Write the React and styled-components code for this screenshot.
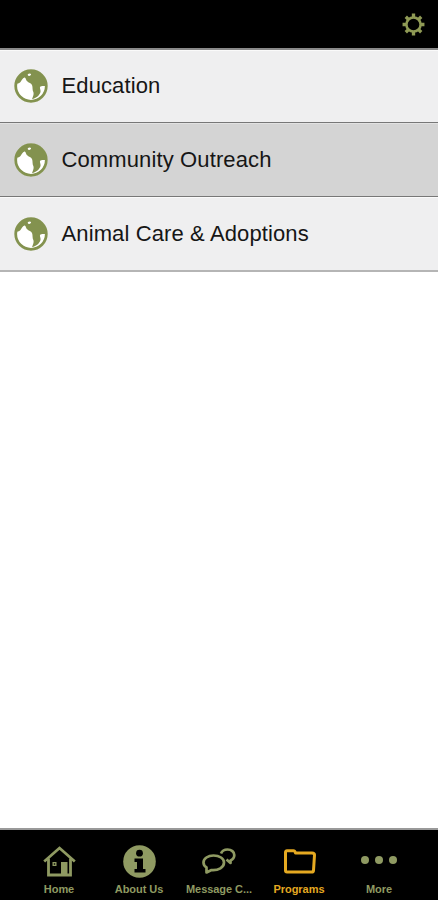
import React from 'react';
import styled, { createGlobalStyle } from 'styled-components';

const Global = createGlobalStyle`
  html, body { margin: 0; padding: 0; background: #fff; }
  #root { height: 900px; }
  * { box-sizing: border-box; }
`;
const Page = styled.div`
  width: 438px; height: 900px; display: flex; flex-direction: column;
  font-family: "Liberation Sans", Arial, sans-serif; background: #fff; overflow: hidden;
`;
const TopBar = styled.header`
  height: 50px; flex: none; background: #000; border-bottom: 2px solid #8a8a8a;
  display: flex; align-items: flex-start; justify-content: flex-end; padding: 12px 12px 0 0;
`;
const List = styled.div`flex: 1; display: flex; flex-direction: column;`;
const Row = styled.div`
  height: 74px; display: flex; align-items: center; gap: 14px; padding-left: 14px;
  background: ${p => p.$active ? '#d4d4d4' : '#efeff0'};
  border-bottom: 1px solid #777;
  box-shadow: inset 0 1px 0 ${p => p.$active ? '#e2e2e2' : '#fafafa'};
  &:first-child { height: 73px; }
  &:last-child { border-bottom: 2px solid #b5b5b5; height: 75px; }
`;
const Label = styled.span`font-size: 22px; color: #161616; letter-spacing: 0.12px; margin-left: -0.5px;`;
const TabBar = styled.nav`
  height: 72px; flex: none; background: #000; border-top: 2px solid #999;
  display: grid; grid-template-columns: repeat(5, 80px); padding-left: 19px;
`;
const Tab = styled.div`
  display: flex; flex-direction: column; align-items: center;
  padding-top: 14px; color: ${p => p.$active ? '#e5a921' : '#8f9a62'};
`;
const IconSlot = styled.div`height: 34px; display: flex; align-items: center; justify-content: center;`;
const TabLabel = styled.span`
  font-size: 11px; font-weight: 700; line-height: 12px; margin-top: 5px; white-space: nowrap; letter-spacing: -0.05px;
`;
const DotsIcon = styled.svg`margin-top: -2px;`;

const Globe = () => (
  <svg width="34" height="34" viewBox="0 0 34 34">
    <circle cx="17" cy="17" r="16.500" fill="#fff" />
    <path fill="#83924f" d="M1.500 15 C3 14.500 5 14.500 6.500 13 C7.500 11.500 8.500 9 10.500 8.500 C12 8.500 11.500 11 13.500 12.500 C15 14 17 14 18 16 C19 18 18 21 19.500 23.500 C20 25.500 19 27.500 18 30 C22.500 29.500 25.500 26 26.500 23 C27 20.500 25 18.500 26.500 17.500 C28 16.800 30.500 17 32.500 17 C32.500 8 25.500 1.500 17 1.500 C9 1.500 2.500 7.500 1.500 15z" />
    <path fill="#fff" d="M14 5c1-.8 2.500-.8 3 0 .3 1-.7 1.800-1.800 2-1 .2-2-1.200-1.200-2z" />
    <path fill="#fff" d="M29.500 19.500c.8-.2 1.300 .2 1.200 1-.5 2-1.500 3.800-3 5.500-.5 .4-1.100 0-.9-.6 .8-2 1.300-4.800 2.700-5.900z" />
    <circle cx="17" cy="17" r="15.300" fill="none" stroke="#83924f" strokeWidth="2.800" />
  </svg>
);
const Gear = () => (
  <svg width="25" height="25" viewBox="0 0 24 24" fill="none" stroke="#8f9a55">
    <circle cx="12" cy="12" r="6.800" strokeWidth="2.400" />
    <path strokeWidth="3.200" d="M12 1.500V5M12 19v3.500M1.500 12H5M19 12h3.500M4.600 4.600l2.500 2.500M16.900 16.900l2.500 2.500M4.600 19.400l2.500-2.500M16.900 7.100l2.500-2.500" />
  </svg>
);
const Home = () => (
  <svg width="33" height="31" viewBox="0 0 33 31" fill="none" stroke="currentColor" strokeWidth="2.800">
    <path d="M1.200 15.500 16.500 2l15.300 13.500" />
    <path d="M5.500 12.500V29h22V12.500" />
    <rect x="18" y="16" width="6.500" height="13" fill="currentColor" stroke="none" />
    <rect x="9.500" y="16" width="4" height="4" fill="currentColor" stroke="none" />
    <rect x="10.800" y="17.300" width="1.400" height="1.400" fill="#000" stroke="none" />
  </svg>
);
const Info = () => (
  <svg width="33" height="33" viewBox="0 0 33 33">
    <circle cx="16.500" cy="16.500" r="16.300" fill="currentColor" />
    <circle cx="16.500" cy="8.200" r="3.400" fill="#000" />
    <path fill="#000" d="M11.500 13.500h8.500v10.500h2.500v3.500h-11V24h2.500v-7h-2.500z" />
  </svg>
);
const Chat = () => (
  <svg width="34" height="26" viewBox="0 0 34 26" fill="none" stroke="currentColor" strokeWidth="2.700" strokeLinejoin="round">
    <path d="M11.500 7.500C6 7.500 1.500 10.500 1.500 14.500c0 2 1 3.700 3 5L4.500 24.500l5-2.500c7 .5 12.500-2.500 12.500-7.500 0-4-4.500-7-10.500-7z" />
    <path d="M19 5.500C20 3 22.500 1.500 25.500 1.500c4 0 6.800 2.500 6.800 5.500 0 2.500-1.500 4.500-3.800 5.500L28.500 15l-4-3.500" />
  </svg>
);
const Folder = () => (
  <svg width="33" height="25" viewBox="0 0 33 25" fill="none" stroke="currentColor" strokeWidth="3" strokeLinejoin="round">
    <path d="M2.500 21.500V3.500c0-1 .5-1.700 1.500-1.700h6.500c1 0 1.500 .7 2 2.200h16.500c1.500 0 2.500 .8 2.500 2l-1 15.500c-.1 1-.8 1.500-2 1.500H4c-1 0-1.500-.5-1.500-1.500z" />
  </svg>
);
const Dots = () => (
  <DotsIcon width="38" height="10" viewBox="0 0 38 10" fill="currentColor">
    <circle cx="5" cy="5" r="4" /><circle cx="19" cy="5" r="4" /><circle cx="33" cy="5" r="4" />
  </DotsIcon>
);

const rows = ['Education', 'Community Outreach', 'Animal Care & Adoptions'];
const tabs = [
  ['Home', <Home />], ['About Us', <Info />], ['Message C...', <Chat />], ['Programs', <Folder />, true], ['More', <Dots />],
];

export default function App() {
  return (
    <Page>
      <Global />
      <TopBar><Gear /></TopBar>
      <List>
        {rows.map((r, i) => (
          <Row key={r} $active={i === 1}><Globe /><Label>{r}</Label></Row>
        ))}
      </List>
      <TabBar>
        {tabs.map(([t, ic, a]) => (
          <Tab key={t} $active={a}><IconSlot>{ic}</IconSlot><TabLabel>{t}</TabLabel></Tab>
        ))}
      </TabBar>
    </Page>
  );
}
